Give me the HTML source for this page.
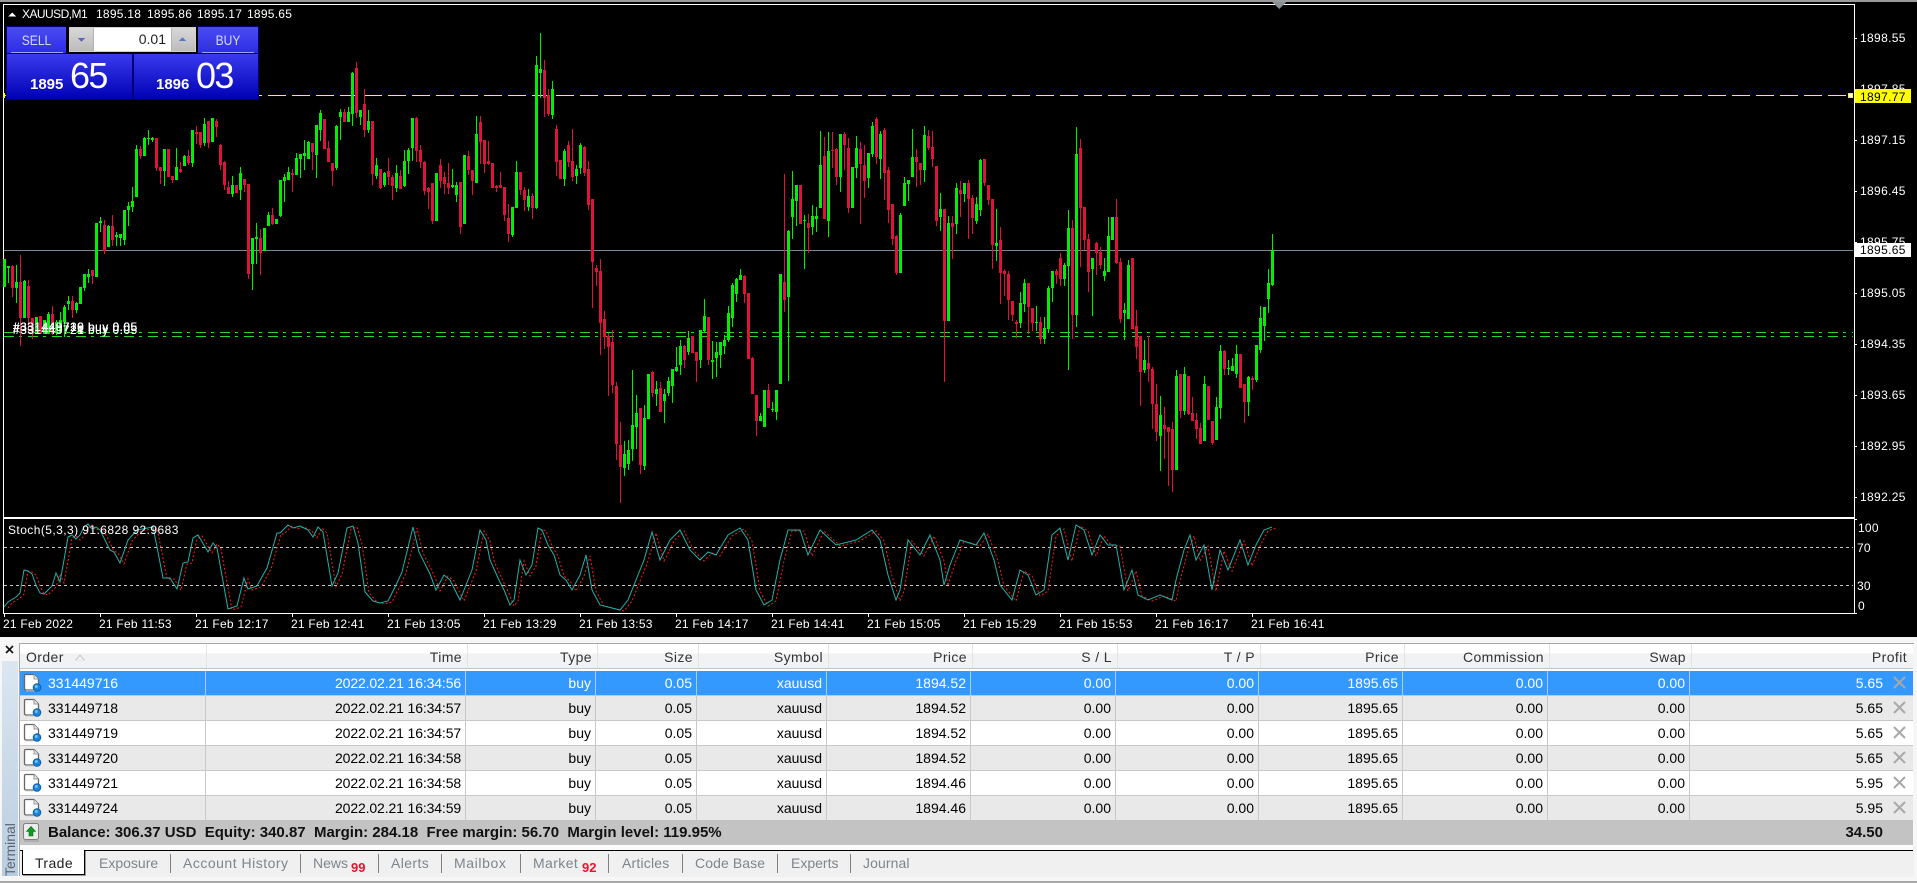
<!DOCTYPE html>
<html><head><meta charset="utf-8"><title>XAUUSD,M1</title>
<style>
html,body{margin:0;padding:0;background:#f0f0f0}
body{position:relative;width:1917px;height:883px;overflow:hidden;font-family:"Liberation Sans",sans-serif;font-size:14px;color:#000}
.abs,.t,.l{position:absolute}
.t{color:#fff;font-size:12px;line-height:14px;white-space:pre;letter-spacing:.25px}
.l{color:#fff;font-size:12px;line-height:14px;white-space:pre;letter-spacing:.35px}
.tab{position:absolute;top:855px;line-height:17px;font-size:14px;color:#7d858d;white-space:pre}
.sep{position:absolute;top:854px;width:1px;height:19px;background:#808080}
.bdg{position:absolute;top:860px;color:#f01030;font-weight:bold;font-size:13px;line-height:15px}
table{position:absolute;left:20px;border-collapse:separate;border-spacing:0;table-layout:fixed;width:1893px;font-size:14px}
td{height:25px;box-sizing:border-box;padding:0 4px 0 0;text-align:right;border-bottom:1px solid #c8c8c8;border-right:1px solid #c8c8c8;white-space:nowrap;overflow:hidden}
td:first-child{text-align:left;padding-left:28px}
td:nth-child(2){letter-spacing:-.13px}
td:last-child{padding-right:30px;border-right:0}
tr.s td{background:#3399ff;color:#fff;border-bottom-color:#bcd;border-right-color:#a5cdf5}
tr.g td{background:#e9e9e9}
tr.w td{background:#fff}
.hc{position:absolute;top:644px;line-height:26px;height:24px;color:#333;font-size:14px;white-space:pre;letter-spacing:.4px}
.hs{position:absolute;top:644px;width:1px;height:24px;background:#e4e4e4}
.btn{position:absolute;top:27px;height:26px;background:linear-gradient(#4c4cf4,#2c2ce4);color:#d4daff;text-align:center}
.pr{position:absolute;top:54px;height:45px;background:linear-gradient(#3a3aee,#0000b4)}
.bold{position:absolute;color:#fff;font-weight:bold;font-size:15px;line-height:18px}
.big{position:absolute;color:#fff;font-size:36px;line-height:40px;letter-spacing:-2px}
</style></head><body>

<div class="abs" style="left:0;top:0;width:1917px;height:637px;background:#000"></div>
<div class="abs" style="left:0;top:0;width:1917px;height:2px;background:#9a9a9a"></div>
<div class="abs" style="left:3px;top:4px;width:1850px;height:512px;border:1px solid #fff;box-sizing:content-box"></div>
<div class="abs" style="left:3px;top:518px;width:1850px;height:94px;border:1px solid #fff"></div>

<svg class="abs" style="left:0;top:0" width="1917" height="640" viewBox="0 0 1917 640" shape-rendering="crispEdges">
<path d="M1272 2h14l-7 7z" fill="#8a8f98"/>
<path d="M10 16.500l4-4 4 4z" fill="#fff" transform="translate(-2 0)"/>
<path d="M4 95.500H1848" stroke="#ffff00" stroke-dasharray="18 6" fill="none"/>
<rect x="3" y="93" width="2" height="5" fill="#ffff00"/>
<rect x="1848.500" y="93.500" width="4" height="4" fill="#fff" stroke="#ffff00"/>
<path d="M4 250.500H1853" stroke="#778899" fill="none"/>
<path d="M4 332.500H1853M4 336.500H1853" stroke="#28d828" stroke-dasharray="10 5 3 6" fill="none"/>

<path fill="none" stroke="#00f000" stroke-width="1" d="M8.500 266V283M16.500 265V303M24.500 280V318M48.500 312V334M56.500 320V335M60.500 312V334M64.500 305V337M68.500 296V310M76.500 302V313M84.500 274V291M88.500 269V283M100.500 217V232M108.500 225V247M116.500 232V246M120.500 234V246M124.500 210V245M128.500 202V226M132.500 187V212M136.500 145V197M144.500 137V156M148.500 130V145M152.500 137V142M164.500 149V186M176.500 148V180M184.500 155V166M192.500 130V167M204.500 118V146M232.500 176V197M240.500 167V200M252.500 238V290M256.500 223V264M268.500 212V226M280.500 180V217M284.500 174V202M288.500 167V180M296.500 153V175M300.500 154V178M304.500 140V170M308.500 141V159M316.500 125V178M320.500 110V141M336.500 125V170M340.500 109V140M348.500 107V122M352.500 72V126M360.500 110V125M368.500 110V133M376.500 158V179M384.500 172V187M396.500 165V192M404.500 150V187M408.500 148V174M412.500 118V161M452.500 169V188M456.500 182V202M476.500 116V183M512.500 207V237M516.500 161V208M528.500 189V211M536.500 56V209M540.500 33V98M552.500 81V119M564.500 149V186M576.500 165V184M580.500 143V174M624.500 441V476M628.500 440V470M632.500 370V461M636.500 395V449M644.500 405V470M656.500 381V406M664.500 389V423M668.500 377V396M672.500 369V403M676.500 347V372M680.500 340V375M688.500 331V355M700.500 330V368M704.500 299V332M712.500 341V379M716.500 342V377M720.500 342V368M724.500 335V354M728.500 306V342M732.500 283V327M736.500 278V302M740.500 269V280M760.500 413V421M772.500 402V412M776.500 390V420M788.500 230V381M792.500 171V239M796.500 185V226M804.500 215V269M812.500 205V235M816.500 207V232M820.500 131V208M828.500 132V237M840.500 134V192M856.500 136V178M868.500 153V188M872.500 122V157M880.500 131V179M900.500 213V273M904.500 177V206M908.500 180V201M912.500 129V177M924.500 126V182M940.500 193V231M948.500 216V321M956.500 183V234M964.500 183V202M976.500 197V224M980.500 159V216M996.500 209V261M1020.500 292V328M1024.500 279V312M1036.500 306V331M1044.500 317V344M1048.500 286V333M1052.500 271V302M1064.500 263V286M1068.500 210V370M1076.500 127V327M1092.500 258V316M1104.500 258V281M1108.500 217V272M1124.500 303V340M1128.500 260V319M1144.500 340V373M1160.500 396V471M1176.500 370V470M1184.500 367V415M1204.500 376V441M1216.500 397V440M1220.500 345V419M1228.500 360V375M1232.500 358V371M1236.500 345V378M1248.500 376V416M1256.500 345V382M1260.500 306V353M1264.500 307V341M1268.500 269V313M1272.500 234V286"/>
<path fill="none" stroke="#00f000" stroke-width="3" d="M4.500 259V287M8.500 266V268M16.500 282V288M24.500 281V318M36.500 317V334M44.500 320V334M48.500 314V334M56.500 322V332M60.500 320V332M64.500 307V322M68.500 301V304M76.500 303V310M80.500 287V304M84.500 274V288M88.500 274V277M96.500 223V277M100.500 221V223M108.500 226V247M116.500 235V237M120.500 234V238M124.500 210V240M128.500 206V210M132.500 201V207M136.500 149V197M144.500 138V156M148.500 138V139M152.500 138V140M164.500 149V171M176.500 167V180M184.500 156V166M192.500 130V163M204.500 124V143M212.500 118V142M232.500 185V194M240.500 173V190M252.500 238V264M256.500 237V239M264.500 228V251M268.500 215V226M276.500 219V224M280.500 180V216M284.500 177V181M288.500 172V180M296.500 158V175M300.500 154V159M304.500 153V156M308.500 142V159M316.500 125V155M320.500 113V130M336.500 126V168M340.500 112V117M348.500 112V122M352.500 73V114M360.500 110V117M368.500 121V130M376.500 165V176M384.500 173V185M396.500 173V188M404.500 161V186M408.500 150V161M412.500 118V148M436.500 173V221M452.500 185V187M456.500 185V195M464.500 155V224M476.500 134V183M512.500 207V235M516.500 172V208M528.500 196V207M536.500 65V208M540.500 69V73M552.500 89V115M564.500 151V179M576.500 169V176M580.500 145V168M624.500 454V468M628.500 450V464M632.500 425V449M636.500 413V427M644.500 418V466M648.500 374V419M656.500 389V394M664.500 394V401M668.500 381V393M672.500 369V386M676.500 367V371M680.500 346V365M688.500 338V352M700.500 330V360M704.500 316V331M712.500 360V362M716.500 352V358M720.500 342V355M724.500 340V346M728.500 313V340M732.500 285V318M736.500 279V294M740.500 275V280M760.500 416V421M764.500 390V427M772.500 409V410M776.500 390V412M780.500 274V384M788.500 231V297M792.500 199V217M796.500 185V201M804.500 220V221M812.500 216V227M816.500 216V219M820.500 165V208M828.500 151V221M840.500 134V177M852.500 167V208M856.500 148V168M868.500 153V178M872.500 126V154M880.500 134V159M900.500 215V273M904.500 183V206M908.500 180V184M912.500 157V177M924.500 135V170M940.500 209V217M948.500 223V321M956.500 188V224M964.500 183V194M976.500 204V221M980.500 160V210M996.500 243V246M1020.500 303V323M1024.500 283V304M1036.500 322V323M1044.500 328V339M1048.500 288V329M1052.500 271V288M1064.500 265V279M1068.500 228V266M1076.500 154V315M1092.500 258V269M1104.500 271V276M1108.500 236V272M1112.500 217V240M1124.500 310V313M1128.500 265V319M1144.500 360V370M1160.500 415V436M1176.500 376V470M1184.500 374V411M1204.500 384V441M1216.500 407V440M1220.500 351V408M1228.500 368V369M1232.500 366V371M1236.500 354V374M1248.500 377V402M1256.500 345V380M1260.500 318V350M1264.500 307V326M1268.500 283V299M1272.500 250V285"/>
<path fill="none" stroke="#dc143c" stroke-width="1" d="M12.500 265V297M20.500 255V346M28.500 280V333M32.500 318V339M52.500 306V335M72.500 296V318M92.500 270V284M104.500 220V254M112.500 215V246M140.500 146V159M156.500 138V171M160.500 167V184M172.500 176V183M180.500 162V173M188.500 150V165M196.500 126V144M200.500 132V148M208.500 121V148M216.500 119V137M220.500 144V170M224.500 161V190M228.500 181V194M244.500 179V192M248.500 184V279M260.500 229V275M272.500 208V225M292.500 169V192M312.500 143V170M324.500 119V149M328.500 141V162M332.500 163V186M344.500 109V122M356.500 62V118M364.500 89V137M372.500 121V185M380.500 169V189M388.500 158V185M392.500 175V200M400.500 170V189M416.500 117V162M420.500 145V168M424.500 161V195M428.500 187V209M432.500 183V224M440.500 159V188M444.500 172V194M448.500 163V194M460.500 182V234M468.500 151V175M472.500 170V195M480.500 116V164M484.500 140V173M488.500 141V165M496.500 185V192M500.500 172V188M504.500 187V221M508.500 204V242M520.500 172V195M524.500 187V211M532.500 193V219M544.500 60V117M548.500 89V116M556.500 125V176M568.500 141V167M572.500 129V181M584.500 146V176M588.500 161V210M592.500 199V308M596.500 265V286M600.500 259V355M604.500 311V349M608.500 333V396M612.500 330V393M616.500 382V460M620.500 422V503M640.500 408V474M652.500 371V397M660.500 382V412M684.500 345V368M696.500 352V382M708.500 317V365M744.500 275V303M752.500 357V394M756.500 395V436M768.500 384V408M784.500 174V312M808.500 214V253M824.500 137V219M832.500 132V168M836.500 148V185M844.500 132V170M848.500 138V213M860.500 142V224M864.500 145V198M876.500 117V164M884.500 128V200M888.500 167V223M892.500 204V245M896.500 235V275M916.500 149V187M920.500 163V185M928.500 130V150M932.500 131V167M936.500 166V226M944.500 209V382M952.500 216V259M960.500 181V217M968.500 180V239M972.500 195V234M984.500 159V186M988.500 185V205M992.500 199V269M1000.500 227V304M1004.500 269V296M1008.500 271V320M1012.500 301V321M1016.500 320V338M1028.500 283V334M1032.500 308V331M1040.500 317V344M1056.500 269V284M1060.500 253V286M1072.500 220V339M1080.500 139V267M1084.500 207V250M1088.500 234V292M1096.500 242V275M1100.500 247V269M1116.500 199V264M1120.500 258V323M1136.500 310V359M1140.500 336V406M1148.500 336V382M1152.500 367V429M1156.500 384V441M1164.500 407V459M1168.500 427V486M1172.500 422V492M1180.500 374V418M1188.500 376V415M1192.500 397V421M1196.500 413V439M1200.500 423V444M1212.500 421V445M1224.500 350V375M1244.500 384V423M1252.500 376V390"/>
<path fill="none" stroke="#dc143c" stroke-width="3" d="M12.500 266V288M20.500 282V318M28.500 286V318M32.500 318V334M40.500 316V334M52.500 314V334M72.500 301V310M92.500 270V276M104.500 225V251M112.500 226V240M140.500 149V156M156.500 138V168M160.500 167V171M168.500 149V177M172.500 176V180M180.500 169V172M188.500 156V163M196.500 132V134M200.500 132V145M208.500 121V143M216.500 121V127M220.500 145V165M224.500 162V185M228.500 187V194M236.500 185V193M244.500 179V185M248.500 184V274M260.500 238V253M272.500 215V224M292.500 173V175M312.500 143V152M324.500 119V149M328.500 148V162M332.500 163V171M344.500 112V122M356.500 68V113M364.500 104V130M372.500 121V174M380.500 169V188M388.500 171V177M392.500 177V186M400.500 176V189M416.500 118V151M420.500 150V162M424.500 162V191M428.500 188V192M432.500 183V221M440.500 165V181M444.500 177V184M448.500 183V188M460.500 182V227M468.500 156V170M472.500 170V181M480.500 122V142M484.500 140V164M488.500 161V164M492.500 163V188M496.500 186V188M500.500 185V188M504.500 187V215M508.500 218V234M520.500 172V190M524.500 190V200M532.500 196V208M544.500 70V98M548.500 95V114M556.500 129V162M560.500 160V179M568.500 145V162M572.500 161V177M584.500 147V173M588.500 169V205M592.500 199V262M596.500 268V272M600.500 271V323M604.500 319V337M608.500 336V347M612.500 342V385M616.500 386V444M620.500 445V467M640.500 408V465M652.500 372V393M660.500 388V412M684.500 346V360M692.500 336V353M696.500 352V361M708.500 317V360M744.500 276V294M748.500 293V359M752.500 358V394M756.500 395V421M768.500 390V408M784.500 282V300M800.500 185V224M808.500 223V228M824.500 156V219M832.500 150V151M836.500 149V177M844.500 134V145M848.500 148V208M860.500 149V164M864.500 165V181M876.500 119V157M884.500 130V173M888.500 170V210M892.500 204V239M896.500 236V273M916.500 157V162M920.500 163V170M928.500 136V148M932.500 147V159M936.500 166V221M944.500 209V321M952.500 223V227M960.500 190V194M968.500 183V199M972.500 198V218M984.500 159V183M988.500 185V200M992.500 199V245M1000.500 240V273M1004.500 271V274M1008.500 274V300M1012.500 301V315M1016.500 322V324M1028.500 283V307M1032.500 308V323M1040.500 322V339M1056.500 271V275M1060.500 258V279M1072.500 228V315M1080.500 148V208M1084.500 207V240M1088.500 239V272M1096.500 243V253M1100.500 252V265M1116.500 217V263M1120.500 262V319M1132.500 258V329M1136.500 326V347M1140.500 336V372M1148.500 363V369M1152.500 369V404M1156.500 404V432M1164.500 425V429M1168.500 427V432M1172.500 429V470M1180.500 374V411M1188.500 376V414M1192.500 413V421M1196.500 420V429M1200.500 428V444M1208.500 386V420M1212.500 421V443M1224.500 351V369M1240.500 354V388M1244.500 384V402M1252.500 378V380"/>

<path d="M4 547.500H1853M4 585.500H1853" stroke="#c8c8c8" stroke-dasharray="3 3" fill="none"/>
<g shape-rendering="auto" fill="none">
<defs><polyline id="st" points="4,607 8,602 16,597 20,593 24,570 28,571 32,574 36,585 40,593 44,594 48,590 52,586 56,573 60,582 64,560 68,537 72,535 76,539 80,535 84,527 88,524 92,529 96,527 100,530 110,550 114,552 120,563 128,540 137,530 153,527 157,547 163,578 170,578 177,589 183,563 188,562 193,538 198,535 208,552 213,543 217,548 228,609 237,606 244,578 248,589 257,586 263,575 267,568 277,533 280,533 288,525 293,528 300,526 308,530 313,537 318,527 323,532 332,586 338,573 347,528 353,526 358,543 365,592 373,601 380,603 388,601 397,583 402,572 413,527 419,552 430,574 436,590 444,575 450,580 460,600 466,585 472,570 480,530 486,540 490,560 498,578 504,590 510,605 514,600 520,560 526,575 532,565 538,528 542,530 548,545 554,555 560,575 566,580 572,590 580,575 586,555 592,590 600,605 612,608 620,610 628,600 636,580 644,560 652,532 660,560 670,540 680,530 690,550 700,560 708,552 716,555 728,535 740,528 748,540 756,590 764,605 772,600 780,560 788,530 800,530 808,555 820,530 836,545 856,540 872,530 880,540 888,575 896,600 900,590 908,540 920,555 930,535 940,560 944,585 950,565 960,540 976,545 984,533 994,560 1000,585 1012,600 1020,570 1028,575 1036,595 1044,590 1052,535 1060,528 1068,560 1076,525 1084,530 1092,555 1100,535 1108,545 1116,545 1124,590 1132,570 1138,595 1148,600 1160,595 1172,600 1176,580 1184,550 1190,535 1196,560 1204,545 1212,590 1220,550 1228,570 1240,540 1248,565 1256,545 1264,530 1272,527"/></defs>
<use href="#st" transform="translate(4 1)" stroke="#ff1a1a" stroke-dasharray="2 2"/>
<use href="#st" stroke="#20b2aa"/>
</g>
<path d="M1854 38.500h3M1854 89.500h3M1854 140.500h3M1854 191.500h3M1854 242.500h3M1854 293.500h3M1854 344.500h3M1854 395.500h3M1854 446.500h3M1854 497.500h3M1854 519.500h3M1854 613.500h3" stroke="#fff"/>
<path d="M4.500 614v3M100.500 614v3M196.500 614v3M292.500 614v3M388.500 614v3M484.500 614v3M580.500 614v3M676.500 614v3M772.500 614v3M868.500 614v3M964.500 614v3M1060.500 614v3M1156.500 614v3M1252.500 614v3" stroke="#fff"/>
</svg>

<!-- header text -->
<span class="t" style="left:22px;top:7px;letter-spacing:-.55px">XAUUSD,M1</span>
<span class="t" style="left:96px;top:7px">1895.18</span>
<span class="t" style="left:147px;top:7px">1895.86</span>
<span class="t" style="left:197px;top:7px">1895.17</span>
<span class="t" style="left:247px;top:7px">1895.65</span>

<!-- order labels -->
<span class="l" style="left:13px;top:320px;letter-spacing:.45px">#331449716 buy 0.05</span>
<span class="l" style="left:13px;top:320px;letter-spacing:.45px">#331449718 buy 0.05</span>
<span class="l" style="left:13px;top:320px;letter-spacing:.45px">#331449719 buy 0.05</span>
<span class="l" style="left:13px;top:320px;letter-spacing:.45px">#331449720 buy 0.05</span>
<span class="l" style="left:13px;top:323px;letter-spacing:.45px">#331449721 buy 0.05</span>
<span class="l" style="left:13px;top:323px;letter-spacing:.45px">#331449724 buy 0.05</span>

<!-- one click panel -->
<div class="abs" style="left:6px;top:26px;width:253px;height:74px;background:#000080;clip-path:polygon(0 0,61px 0,61px 27px,192px 27px,192px 0,100% 0,100% 100%,0 100%)"></div>
<div class="btn" style="left:7px;width:59px"><span class="abs" style="left:0;top:5px;width:59px;line-height:16px;transform:scaleX(.86)">SELL</span><div class="abs" style="left:4px;top:25px;width:52px;height:1px;background:#9ea4f0"></div></div>
<div class="btn" style="left:198px;width:60px"><span class="abs" style="left:0;top:5px;width:60px;line-height:16px;transform:scaleX(.86)">BUY</span><div class="abs" style="left:4px;top:25px;width:52px;height:1px;background:#9ea4f0"></div></div>
<div class="abs" style="left:66px;top:26px;width:132px;height:28px;background:#000"></div>
<div class="abs" style="left:69px;top:27px;width:127px;height:25px;background:#b4b4b4;box-sizing:border-box;border:1px solid #d0d0d0"></div>
<div class="abs" style="left:70px;top:28px;width:23px;height:23px;background:linear-gradient(#d8d8d8,#bcbcbc)"></div>
<div class="abs" style="left:172px;top:28px;width:23px;height:23px;background:linear-gradient(#d8d8d8,#bcbcbc)"></div>
<div class="abs" style="left:94px;top:28px;width:77px;height:23px;background:#fff;text-align:right;line-height:23px;color:#222;font-size:14px"><span style="padding-right:5px">0.01</span></div>
<svg class="abs" style="left:70px;top:28px" width="125" height="23" shape-rendering="crispEdges"><path d="M8 10h7l-3.500 4z" fill="#5a66c0"/><path d="M109 13h7l-3.500-4z" fill="#5a78c8"/></svg>
<div class="pr" style="left:7px;width:125px"></div>
<div class="pr" style="left:134px;width:124px"></div>
<span class="bold" style="left:30px;top:76px">1895</span>
<span class="big" style="left:70px;top:56px;letter-spacing:-1.600px">65</span>
<span class="bold" style="left:156px;top:76px">1896</span>
<span class="big" style="left:196px;top:56px;letter-spacing:-1.600px">03</span>

<!-- price axis -->
<span class="l" style="left:1860px;top:31px">1898.55</span>
<span class="l" style="left:1860px;top:82px">1897.85</span>
<span class="l" style="left:1860px;top:133px">1897.15</span>
<span class="l" style="left:1860px;top:184px">1896.45</span>
<span class="l" style="left:1860px;top:235px">1895.75</span>
<span class="l" style="left:1860px;top:286px">1895.05</span>
<span class="l" style="left:1860px;top:337px">1894.35</span>
<span class="l" style="left:1860px;top:388px">1893.65</span>
<span class="l" style="left:1860px;top:439px">1892.95</span>
<span class="l" style="left:1860px;top:490px">1892.25</span>
<div class="abs" style="left:1855px;top:89px;width:56px;height:14px;background:#ffff00"></div>
<span class="l" style="left:1860px;top:90px;color:#000">1897.77</span>
<div class="abs" style="left:1855px;top:243px;width:56px;height:14px;background:#fff"></div>
<span class="l" style="left:1860px;top:243px;color:#000">1895.65</span>

<!-- stoch text -->
<span class="t" style="left:8px;top:523px;letter-spacing:.43px">Stoch(5,3,3) 91.6828 92.9683</span>
<span class="t" style="left:1858px;top:521px">100</span>
<span class="t" style="left:1857px;top:541px">70</span>
<span class="t" style="left:1857px;top:579px">30</span>
<span class="t" style="left:1858px;top:599px">0</span>

<!-- time axis -->
<span class="t" style="left:3px;top:617px">21 Feb 2022</span>
<span class="t" style="left:99px;top:617px">21 Feb 11:53</span>
<span class="t" style="left:195px;top:617px">21 Feb 12:17</span>
<span class="t" style="left:291px;top:617px">21 Feb 12:41</span>
<span class="t" style="left:387px;top:617px">21 Feb 13:05</span>
<span class="t" style="left:483px;top:617px">21 Feb 13:29</span>
<span class="t" style="left:579px;top:617px">21 Feb 13:53</span>
<span class="t" style="left:675px;top:617px">21 Feb 14:17</span>
<span class="t" style="left:771px;top:617px">21 Feb 14:41</span>
<span class="t" style="left:867px;top:617px">21 Feb 15:05</span>
<span class="t" style="left:963px;top:617px">21 Feb 15:29</span>
<span class="t" style="left:1059px;top:617px">21 Feb 15:53</span>
<span class="t" style="left:1155px;top:617px">21 Feb 16:17</span>
<span class="t" style="left:1251px;top:617px">21 Feb 16:41</span>

<!-- terminal -->
<div class="abs" style="left:0;top:637px;width:1917px;height:246px;background:#f6f6f6"></div>
<svg class="abs" style="left:5px;top:645px" width="9" height="9"><path d="M1 1L8 8M8 1L1 8" stroke="#111" stroke-width="1.600"/></svg>
<div class="abs" style="left:2px;top:661px;width:16px;height:215px;background:linear-gradient(#dbe6f1,#b9cde0)"></div>
<div class="abs" style="left:2px;top:822px;width:16px;height:54px;writing-mode:vertical-rl;transform:rotate(180deg);line-height:16px;font-size:14px;color:#5a6672;white-space:nowrap;text-align:left">Terminal</div>

<div class="abs" style="left:19px;top:643px;width:1895px;height:1px;background:#a8a8a8"></div>
<div class="abs" style="left:19px;top:643px;width:1px;height:233px;background:#a8a8a8"></div>
<div class="abs" style="left:20px;top:644px;width:1893px;height:24px;background:linear-gradient(#fff 40%,#f1f2f4 40%)"></div>
<div class="abs" style="left:20px;top:668px;width:1893px;height:1px;background:#c4c4c4"></div>
<div class="abs" style="left:20px;top:669px;width:1893px;height:2px;background:#fff"></div>
<div class="hs" style="left:206px"></div><div class="hs" style="left:467px"></div><div class="hs" style="left:597px"></div><div class="hs" style="left:698px"></div><div class="hs" style="left:828px"></div><div class="hs" style="left:972px"></div><div class="hs" style="left:1117px"></div><div class="hs" style="left:1260px"></div><div class="hs" style="left:1404px"></div><div class="hs" style="left:1549px"></div><div class="hs" style="left:1691px"></div>
<span class="hc" style="left:26px">Order</span>
<svg class="abs" style="left:75px;top:654px" width="10" height="7"><path d="M.5 6.500L5 1L9.500 6.500" fill="none" stroke="#c8c8c8"/><path d="M1 6.500H9" stroke="#e8e8e8"/></svg>
<span class="hc" style="right:1455px">Time</span>
<span class="hc" style="right:1325px">Type</span>
<span class="hc" style="right:1224px">Size</span>
<span class="hc" style="right:1094px">Symbol</span>
<span class="hc" style="right:950px">Price</span>
<span class="hc" style="right:805px">S / L</span>
<span class="hc" style="right:662px">T / P</span>
<span class="hc" style="right:518px">Price</span>
<span class="hc" style="right:373px">Commission</span>
<span class="hc" style="right:231px">Swap</span>
<span class="hc" style="right:10px">Profit</span>

<table style="top:671px">
<colgroup><col style="width:186px"><col style="width:260px"><col style="width:130px"><col style="width:101px"><col style="width:130px"><col style="width:144px"><col style="width:145px"><col style="width:143px"><col style="width:144px"><col style="width:145px"><col style="width:142px"><col style="width:223px"></colgroup>
<tr class="s"><td>331449716</td><td>2022.02.21 16:34:56</td><td>buy</td><td>0.05</td><td>xauusd</td><td>1894.52</td><td>0.00</td><td>0.00</td><td>1895.65</td><td>0.00</td><td>0.00</td><td>5.65</td></tr>
<tr class="g"><td>331449718</td><td>2022.02.21 16:34:57</td><td>buy</td><td>0.05</td><td>xauusd</td><td>1894.52</td><td>0.00</td><td>0.00</td><td>1895.65</td><td>0.00</td><td>0.00</td><td>5.65</td></tr>
<tr class="w"><td>331449719</td><td>2022.02.21 16:34:57</td><td>buy</td><td>0.05</td><td>xauusd</td><td>1894.52</td><td>0.00</td><td>0.00</td><td>1895.65</td><td>0.00</td><td>0.00</td><td>5.65</td></tr>
<tr class="g"><td>331449720</td><td>2022.02.21 16:34:58</td><td>buy</td><td>0.05</td><td>xauusd</td><td>1894.52</td><td>0.00</td><td>0.00</td><td>1895.65</td><td>0.00</td><td>0.00</td><td>5.65</td></tr>
<tr class="w"><td>331449721</td><td>2022.02.21 16:34:58</td><td>buy</td><td>0.05</td><td>xauusd</td><td>1894.46</td><td>0.00</td><td>0.00</td><td>1895.65</td><td>0.00</td><td>0.00</td><td>5.95</td></tr>
<tr class="g"><td>331449724</td><td>2022.02.21 16:34:59</td><td>buy</td><td>0.05</td><td>xauusd</td><td>1894.46</td><td>0.00</td><td>0.00</td><td>1895.65</td><td>0.00</td><td>0.00</td><td>5.95</td></tr>
</table>

<svg class="abs" style="left:0;top:660px" width="1917" height="190">
<defs>
<g id="doc"><path d="M2.500 1.500H11L15.500 6V15.500A1.500 1.500 0 0 1 14 17H3A1.500 1.500 0 0 1 1.500 15.500V2.500A1 1 0 0 1 2.500 1.500Z" fill="#fff" stroke="#666" stroke-width="1.300"/><path d="M11 1.500V6H15.500" fill="#e4e4e4" stroke="#9a9a9a"/><path d="M3 17.800H14" stroke="#c0c0c0"/><circle cx="14" cy="14.500" r="3.800" fill="#1b84dc" stroke="#0b5fa8"/><circle cx="13.300" cy="13.500" r="1.500" fill="#6fc0f4"/></g>
<path id="xx" d="M0 0L11 11M11 0L0 11" stroke="#a8a8a8" stroke-width="2" fill="none"/>
</defs>
<use href="#doc" x="23" y="13"/><use href="#doc" x="23" y="38"/><use href="#doc" x="23" y="63"/><use href="#doc" x="23" y="88"/><use href="#doc" x="23" y="113"/><use href="#doc" x="23" y="138"/>
<use href="#xx" x="1894" y="17"/><use href="#xx" x="1894" y="42"/><use href="#xx" x="1894" y="67"/><use href="#xx" x="1894" y="92"/><use href="#xx" x="1894" y="117"/><use href="#xx" x="1894" y="142"/>
</svg>

<div class="abs" style="left:20px;top:820px;width:1893px;height:25px;background:#c3c3c3"></div>
<svg class="abs" style="left:23px;top:823px" width="18" height="19"><rect x=".5" y=".5" width="15" height="16" rx="2" fill="#ececec" stroke="#808080"/><path d="M1 18H16" stroke="#999"/><path d="M8 3.500L12.500 8.500H10V13H6V8.500H3.500Z" fill="#0aa01e" stroke="#067014" stroke-width=".6"/></svg>
<span class="abs" style="left:48px;top:824px;line-height:17px;font-weight:bold;font-size:15px;color:#111;white-space:pre">Balance: 306.37 USD  Equity: 340.87  Margin: 284.18  Free margin: 56.70  Margin level: 119.95%</span>
<span class="abs" style="right:34px;top:824px;line-height:17px;font-weight:bold;font-size:15px;color:#111">34.50</span>

<!-- tabs -->
<div class="abs" style="left:20px;top:846px;width:1894px;height:31px;background:#f0f0f0"></div>
<div class="abs" style="left:20px;top:845px;width:1893px;height:5px;background:#fbfbfb"></div>
<div class="abs" style="left:20px;top:850px;width:1893px;height:1px;background:#000"></div>
<div class="abs" style="left:22px;top:850px;width:63px;height:25px;background:#fff;box-sizing:border-box;border-left:1px solid #000;border-right:1px solid #000;border-bottom:1px solid #000;box-shadow:1px 1px 0 #9a9a9a"></div>
<div class="abs" style="left:85px;top:850px;width:1828px;height:1px;background:#000"></div>
<span class="tab" style="left:35px;color:#222;letter-spacing:.4px">Trade</span>
<span class="tab" style="left:99px">Exposure</span><i class="sep" style="left:170px"></i>
<span class="tab" style="left:183px;letter-spacing:.5px">Account History</span><i class="sep" style="left:300px"></i>
<span class="tab" style="left:313px">News</span><span class="bdg" style="left:351px">99</span><i class="sep" style="left:378px"></i>
<span class="tab" style="left:391px;letter-spacing:.4px">Alerts</span><i class="sep" style="left:441px"></i>
<span class="tab" style="left:454px;letter-spacing:.6px">Mailbox</span><i class="sep" style="left:520px"></i>
<span class="tab" style="left:533px;letter-spacing:.4px">Market</span><span class="bdg" style="left:582px">92</span><i class="sep" style="left:608px"></i>
<span class="tab" style="left:622px;letter-spacing:.2px">Articles</span><i class="sep" style="left:682px"></i>
<span class="tab" style="left:695px;letter-spacing:.1px">Code Base</span><i class="sep" style="left:777px"></i>
<span class="tab" style="left:791px">Experts</span><i class="sep" style="left:850px"></i>
<span class="tab" style="left:863px;letter-spacing:.1px">Journal</span>

<div class="abs" style="left:0;top:877px;width:1917px;height:4px;background:#f6f6f6"></div>
<div class="abs" style="left:0;top:881px;width:1917px;height:2px;background:#a8a8a8"></div>
</body></html>
